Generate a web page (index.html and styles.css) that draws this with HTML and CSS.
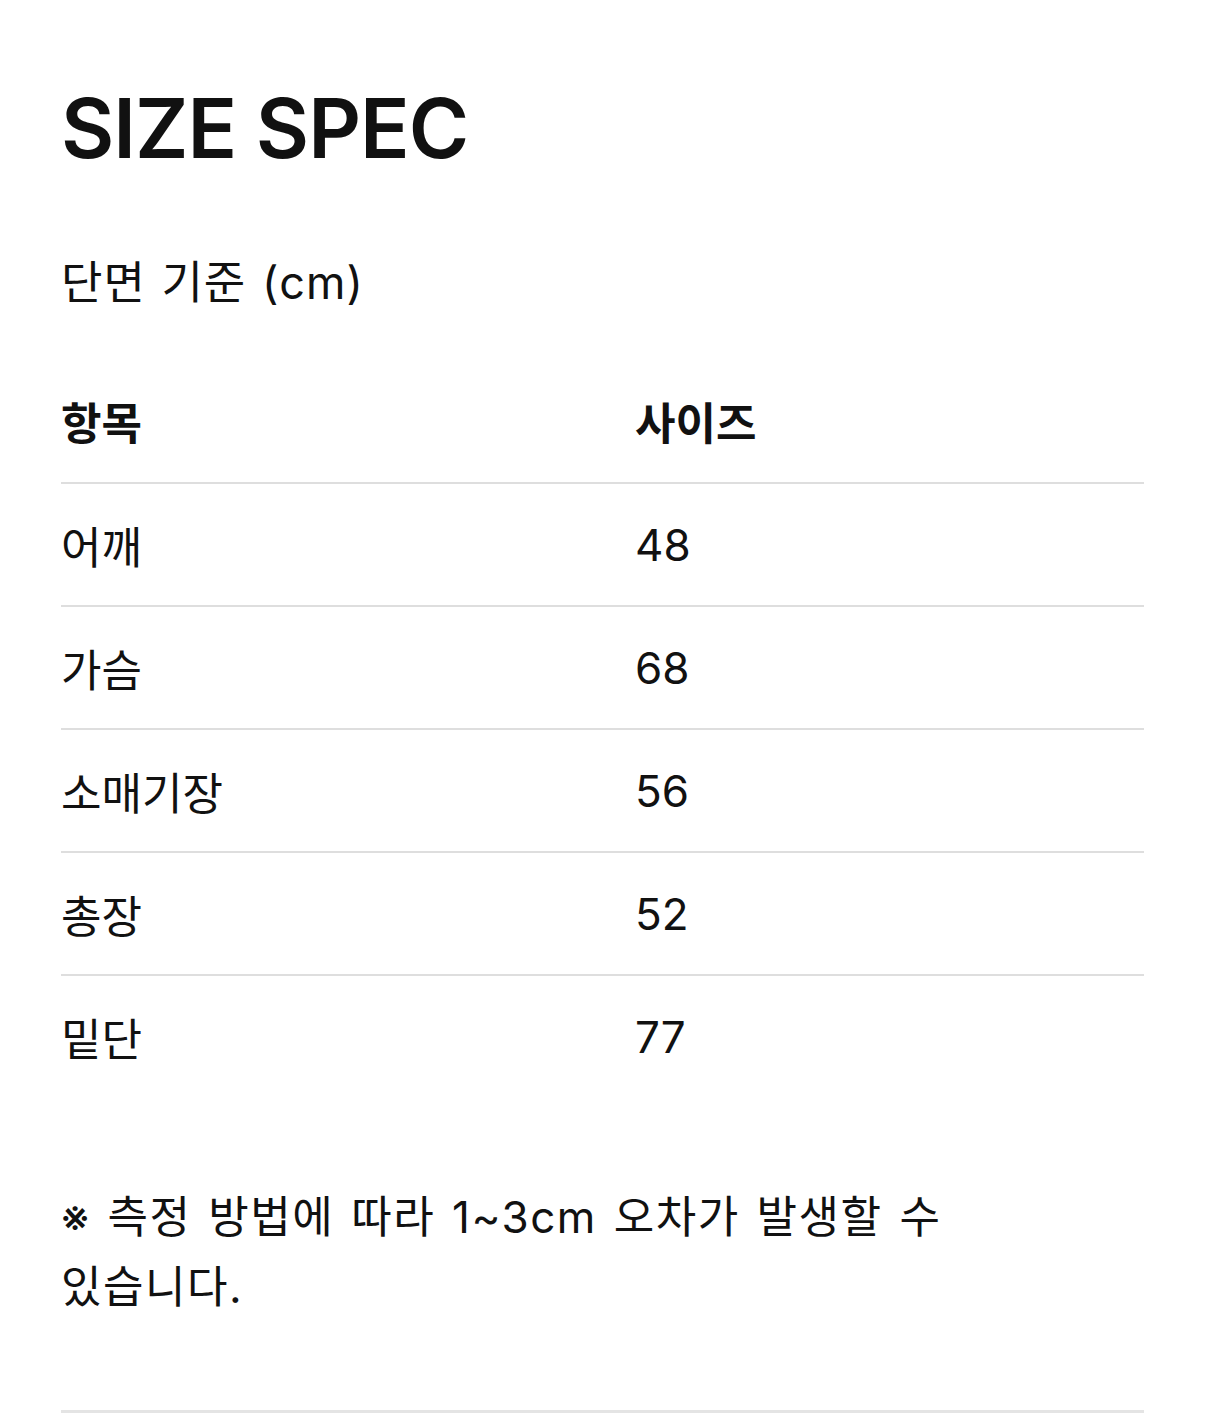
FILE: index.html
```html
<!DOCTYPE html>
<html lang="ko">
<head>
<meta charset="utf-8">
<link rel="stylesheet" href="styles.css">
</head>
<body>
<main class="page">
  <h1 class="title">SIZE SPEC</h1>
  <p class="subtitle">단면 기준 (cm)</p>
  <div class="table">
    <div class="row head"><div class="cell">항목</div><div class="cell">사이즈</div></div>
    <div class="row"><div class="cell">어깨</div><div class="cell">48</div></div>
    <div class="row"><div class="cell">가슴</div><div class="cell">68</div></div>
    <div class="row"><div class="cell">소매기장</div><div class="cell">56</div></div>
    <div class="row"><div class="cell">총장</div><div class="cell">52</div></div>
    <div class="row"><div class="cell">밑단</div><div class="cell">77</div></div>
  </div>
  <p class="note">※ 측정 방법에 따라 1~3cm 오차가 발생할 수 있습니다.</p>
  <hr class="rule">
</main>
</body>
</html>
```
FILE: styles.css
```css
html, body { margin: 0; padding: 0; background: #fff; }
body {
  font-family: Inter, "Noto Sans CJK KR", sans-serif;
  color: #111;
  word-break: keep-all;
}
.page { padding: 0 62px 0 61px; }
.title {
  margin: 0;
  padding-top: 88px;
  font-size: 82px;
  font-weight: 600;
  line-height: 82px;
  letter-spacing: -1px;
}
.subtitle {
  margin: 0;
  padding-top: 83px;
  font-size: 45px;
  line-height: 60px;
  letter-spacing: 1px;
  word-spacing: 2px;
}
.table { margin-top: 46px; }
.row {
  display: grid;
  grid-template-columns: 574px 1fr;
  align-items: center;
  height: 121px;
  border-top: 2px solid #dedede;
  font-size: 44px;
}
.row.head { border-top: 0; height: 123px; font-weight: 700; }
.note {
  margin: 0;
  padding-top: 85px;
  max-width: 940px;
  font-size: 44px;
  line-height: 70px;
  letter-spacing: 1.5px;
  word-spacing: 3px;
}
.rule {
  margin: 88px 0 0;
  border: 0;
  border-top: 3px solid #e4e4e4;
}
```
